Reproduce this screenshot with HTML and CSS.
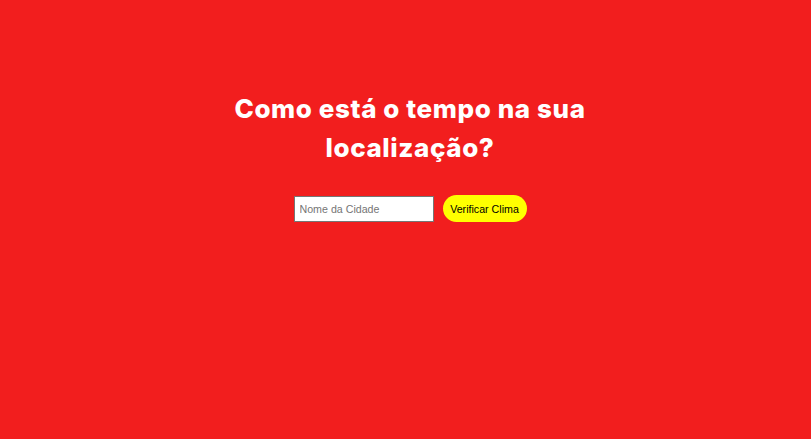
FILE: index.html
```html
<!DOCTYPE html>
<html lang="pt-BR">
<head>
<meta charset="utf-8">
<title>Clima</title>
<link rel="stylesheet" href="styles.css">
</head>
<body>
<main class="container">
  <h1 class="title">Como está o tempo na sua localização?</h1>
  <form class="search">
    <input class="city" type="text" placeholder="Nome da Cidade">
    <button class="check" type="button">Verificar Clima</button>
  </form>
</main>
</body>
</html>
```
FILE: styles.css
```css
html, body {
  margin: 0;
  height: 100%;
  background: #f21e1e;
}
body {
  padding-left: 9px;
  box-sizing: border-box;
}
.container {
  display: flex;
  flex-direction: column;
  align-items: center;
  padding-top: 89px;
}
.title {
  margin: 0;
  width: 390px;
  text-align: center;
  color: #ffffff;
  font-family: Inter, sans-serif;
  font-weight: 800;
  font-size: 26px;
  line-height: 39px;
  letter-spacing: 0.6px;
}
.search {
  display: flex;
  align-items: center;
  gap: 9px;
  margin-top: 28px;
}
.city {
  box-sizing: border-box;
  width: 140px;
  height: 26px;
  margin: 0;
  padding: 1px 5px;
  border: 1px solid #767676;
  border-radius: 0;
  background: #ffffff;
  font-family: "Liberation Sans", Arial, sans-serif;
  font-size: 10.67px;
  color: #000;
}
.city::placeholder {
  color: #757575;
}
.check {
  box-sizing: border-box;
  height: 27px;
  width: 84px;
  margin: 0;
  padding: 0;
  border: none;
  border-radius: 14px;
  background: #ffff00;
  color: #000;
  font-family: "Liberation Sans", Arial, sans-serif;
  font-size: 10.67px;
}
```
